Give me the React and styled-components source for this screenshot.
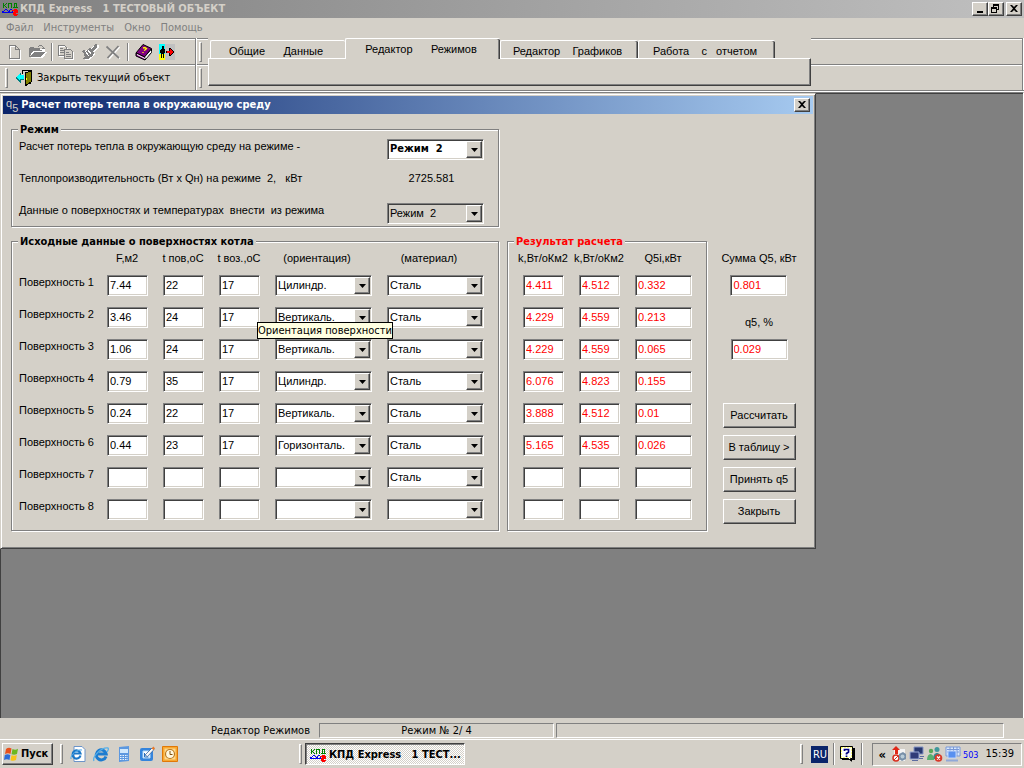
import React, { useState } from 'react';
import styled, { createGlobalStyle, css } from 'styled-components';

const FACE = '#d4d0c8';
const SHADOW = '#808080';
const DARK = '#404040';
const TAHOMA = '"DejaVu Sans Condensed", "DejaVu Sans", sans-serif';
const SANS = '"Liberation Sans", "Noto Sans", sans-serif';

const GlobalStyle = createGlobalStyle`
  * {
    box-sizing: border-box;
  }
  body {
    margin: 0;
    background: ${FACE};
    color: #000;
    font: 11px/14px ${TAHOMA};
  }
  button, input, select {
    font: inherit;
    color: inherit;
    border-radius: 0;
  }
`;

const raised = css`
  border: 1px solid;
  border-color: #fff ${DARK} ${DARK} #fff;
  box-shadow: inset -1px -1px 0 ${SHADOW};
`;

const sunken = css`
  border: 1px solid;
  border-color: ${SHADOW} #fff #fff ${SHADOW};
  box-shadow: inset 1px 1px 0 ${DARK}, inset -1px -1px 0 ${FACE};
`;

const Page = styled.div`
  display: flex;
  flex-direction: column;
  min-height: 100vh;
`;

const AppTitle = styled.header`
  display: flex;
  align-items: center;
  gap: 2px;
  height: 18px;
  padding: 0 2px;
  background: linear-gradient(to right, #808080, #c0c0c0);
  color: ${FACE};
  font-weight: bold;
  white-space: pre;
`;

const TitleText = styled.h1`
  flex: 1;
  margin: 0;
  font: inherit;
`;

const CaptionButton = styled.button`
  ${raised}
  display: flex;
  align-items: center;
  justify-content: center;
  width: 16px;
  height: 14px;
  padding: 0 1px 1px 0;
  background: ${FACE};
  color: #000;
`;

const CaptionPair = styled.div`
  display: flex;
`;

const MenuBar = styled.nav`
  display: flex;
  align-items: center;
  gap: 10px;
  height: 20px;
  padding-left: 6px;

  a {
    color: ${SHADOW};
    text-decoration: none;
  }
`;

const Bars = styled.div`
  display: flex;
  height: 53px;
  border-bottom: 1px solid ${SHADOW};
`;

const BarColumn = styled.div`
  display: flex;
  flex-direction: column;
  flex: ${p => (p.$grow ? '1' : 'none')};
  width: ${p => (p.$grow ? 'auto' : '196px')};
  margin-right: ${p => (p.$grow ? '1px' : '0')};
  border-right: 1px solid ${SHADOW};
  box-shadow: 1px 0 0 #fff;
`;

const Bar = styled.div`
  display: flex;
  align-items: center;
  gap: ${p => p.$gap || 0}px;
  height: 26px;
  padding-left: 5px;
  border-top: 1px solid ${SHADOW};
  box-shadow: inset 0 1px 0 #fff;
`;

const GripColumn = styled.div`
  display: flex;
  flex-direction: column;
  width: 12px;
  padding-left: 1px;
`;

const GripCell = styled.div`
  display: flex;
  align-items: center;
  height: 26px;
  padding-left: 2px;
  border-top: 1px solid ${SHADOW};
  box-shadow: inset 0 1px 0 #fff;
`;

const Grip = styled.span`
  flex: none;
  width: 3px;
  height: 20px;
  border: 1px solid;
  border-color: #fff ${SHADOW} ${SHADOW} #fff;
`;

const Divider = styled.span`
  flex: none;
  width: 2px;
  height: ${p => p.$height || 18}px;
  margin: 0 ${p => p.$space || 0}px;
  border-left: 1px solid ${SHADOW};
  border-right: 1px solid #fff;
`;

const ToolButton = styled.button`
  display: flex;
  align-items: center;
  gap: 5px;
  height: 20px;
  padding: 0 2px;
  border: 0;
  background: none;
  white-space: nowrap;
`;

const TabControl = styled.div`
  display: flex;
  flex-direction: column;
  width: 603px;
  height: 48px;
  font-family: ${SANS};
`;

const TabStrip = styled.div`
  display: flex;
  align-items: flex-end;
  height: 20px;
  padding-left: 2px;
`;

const Tab = styled.button`
  width: ${p => p.$width}px;
  height: 18px;
  padding: 2px 4px 0 0;
  border: 0;
  border-top: 1px solid #fff;
  border-left: 1px solid #fff;
  border-radius: 2px 2px 0 0;
  background: ${FACE};
  box-shadow: ${p => (p.$covered ? 'none' : `inset -1px 0 0 ${DARK}, inset -2px 0 0 ${SHADOW}`)};
  white-space: pre;

  ${p => p.$active && css`
    position: relative;
    height: 21px;
    margin-bottom: -1px;
    padding-bottom: 3px;
  `}
`;

const TabPanel = styled.div`
  ${raised}
  flex: 1;
`;

const Mdi = styled.main`
  flex: 1;
  display: flex;
  align-items: flex-start;
  margin-top: 1px;
  border-top: 1px solid ${SHADOW};
  border-right: 1px solid #fff;
  outline: 1px solid #fff;
  outline-offset: 0;
  background: ${SHADOW};
  box-shadow: inset 1px 1px 0 ${DARK};
`;

const Dialog = styled.section`
  padding: 1px;
  border: 1px solid;
  border-color: ${FACE} ${DARK} ${DARK} ${FACE};
  box-shadow: inset 1px 1px 0 #fff, inset -1px -1px 0 ${SHADOW};
  background: ${FACE};
  font-family: ${SANS};
`;

const DialogTitle = styled.div`
  display: flex;
  align-items: center;
  gap: 3px;
  height: 18px;
  margin: 1px 1px 0;
  padding: 0 3px;
  background: linear-gradient(to right, #0a246a, #a6caf0);
  color: #fff;
  font: bold 11px/14px ${TAHOMA};

  h2 {
    flex: 1;
    margin: 0;
    font: inherit;
  }
`;

const DialogMark = styled.span`
  display: flex;
  color: ${FACE};
  font: 11px/10px ${SANS};

  sub {
    padding-top: 5px;
    font-size: 11px;
    line-height: 10px;
  }
`;

const DialogBody = styled.form`
  display: flex;
  flex-direction: column;
  align-items: flex-start;
  gap: 8px;
  padding: 9px 11px 16px 9px;
`;

const Columns = styled.div`
  display: flex;
  gap: 8px;
`;

const Group = styled.fieldset`
  margin: 0;
  min-width: 0;
  width: ${p => p.$width}px;
  padding: 0 0 0 7px;
  border: 1px solid ${SHADOW};
  box-shadow: inset 1px 1px 0 #fff, 1px 1px 0 #fff;

  legend {
    margin-left: -1px;
    padding: 0 2px;
    background: ${FACE};
    color: ${p => (p.$red ? '#f00' : '#000')};
    font: bold 11px/13px ${TAHOMA};
  }
`;

const ModeRow = styled.div`
  display: flex;
  align-items: flex-start;
  height: 32px;
  white-space: pre;

  &:first-of-type {
    margin-top: 3px;
  }
  &:last-of-type {
    height: 23px;
  }
  > output {
    width: 89px;
    text-align: center;
  }
`;

const ModeText = styled.span`
  flex: none;
  width: 368px;
`;

const Sheet = styled.table`
  table-layout: fixed;
  width: ${p => p.$width}px;
  border-collapse: collapse;

  th, td {
    height: 32px;
    padding: 0 0 0 8px;
    vertical-align: top;
    text-align: left;
    font-weight: normal;
    white-space: nowrap;
  }
  tbody th {
    padding-left: 0;
  }
  tbody tr:last-child > * {
    height: 31px;
  }
`;

const HeadRow = styled.tr`
  && th {
    height: 27px;
    padding: 3px 0 0;
    text-align: center;
  }
  && th.combo {
    padding-right: 12px;
  }
`;

const HeadText = styled.span`
  display: flex;
  justify-content: center;
`;

const Field = styled.input`
  ${sunken}
  display: block;
  width: ${p => p.$width || 41}px;
  height: 21px;
  padding: 0 2px 1px;
  background: #fff;
  color: ${p => (p.$red ? '#f00' : '#000')};
  outline: none;
`;

const ComboBox = styled.span`
  position: relative;
  display: block;
  width: 97px;
  height: 21px;

  select {
    ${sunken}
    appearance: none;
    width: 100%;
    height: 100%;
    padding: 0 18px 1px 2px;
    background: ${p => (p.$gray ? FACE : '#fff')};
    font-family: ${p => (p.$bold ? TAHOMA : 'inherit')};
    font-weight: ${p => (p.$bold ? 'bold' : 'normal')};
    outline: none;
  }
`;

const ComboArrow = styled.span`
  ${raised}
  position: absolute;
  top: 2px;
  right: 2px;
  display: flex;
  align-items: center;
  justify-content: center;
  width: 16px;
  height: 17px;
  background: ${FACE};
  pointer-events: none;
`;

const Hint = styled.span`
  position: absolute;
  z-index: 2;
  top: 15px;
  left: -18px;
  padding: 1px 0 0;
  border: 1px solid #000;
  background: #ffffe1;
  font-family: ${TAHOMA};
  line-height: 14px;
  white-space: nowrap;
`;

const Side = styled.div`
  display: flex;
  flex-direction: column;
  align-items: center;
  width: 88px;
  padding-top: 16px;
`;

const Total = styled.label`
  display: flex;
  flex-direction: column;
  align-items: center;
  gap: 10px;
  height: 64px;
  white-space: nowrap;
`;

const PushButton = styled.button`
  ${raised}
  width: 73px;
  height: 25px;
  padding: 0 0 1px;
  background: ${FACE};
`;

const Actions = styled.div`
  display: flex;
  flex-direction: column;
  gap: 7px;
  padding-top: 24px;
`;

const StatusBar = styled.div`
  display: flex;
  gap: 2px;
  height: 21px;
  padding: 4px 20px 1px 0;
  border-top: 1px solid ${FACE};
  white-space: pre;
`;

const StatusPane = styled.div`
  flex: ${p => (p.$width ? 'none' : '1')};
  width: ${p => p.$width || 0}px;
  border: ${p => (p.$flat ? '0' : '1px solid')};
  border-color: ${SHADOW} #fff #fff ${SHADOW};
  padding: ${p => (p.$flat ? '1px 7px 0 0' : '0')};
  text-align: ${p => (p.$flat ? 'right' : 'center')};
  line-height: 14px;
`;

const TaskBar = styled.footer`
  display: flex;
  align-items: center;
  height: 29px;
  padding: 0 2px;
  border-top: 1px solid #fff;
`;

const StartButton = styled.button`
  ${raised}
  display: flex;
  align-items: center;
  gap: 1px;
  width: 51px;
  height: 22px;
  padding: 0 1px;
  background: ${FACE};
  font-weight: bold;
`;

const QuickLaunch = styled.div`
  display: flex;
  flex: none;
  align-items: center;
  gap: 7px;
  width: 246px;
  padding: 0 0 0 7px;

  button {
    display: flex;
    padding: 0;
    border: 0;
    background: none;
  }
`;

const TaskButton = styled.button`
  border: 1px solid;
  border-color: ${DARK} #fff #fff ${DARK};
  box-shadow: inset 1px 1px 0 ${SHADOW};
  display: flex;
  align-items: center;
  gap: 3px;
  width: 160px;
  height: 22px;
  margin-left: 3px;
  padding: 1px 0 0 4px;
  background: repeating-conic-gradient(#fff 0 25%, ${FACE} 0 50%) 0 0 / 2px 2px;
  font-weight: bold;
  white-space: pre;
`;

const TaskEnd = styled.div`
  display: flex;
  align-items: center;
  margin-left: auto;
  gap: 5px;
`;

const Language = styled.span`
  width: 17px;
  height: 17px;
  margin-left: 3px;
  background: #0a246a;
  color: #fff;
  line-height: 17px;
  text-align: center;
`;

const Tray = styled.div`
  display: flex;
  align-items: center;
  gap: 2px;
  height: 23px;
  margin-left: 4px;
  padding: 0 7px 0 5px;
  border: 1px solid;
  border-color: ${SHADOW} #fff #fff ${SHADOW};

  b {
    margin-right: 3px;
    font-size: 13px;
    line-height: 13px;
  }
  small {
    padding-top: 2px;
    color: #00f;
    font-size: 9px;
  }
  time {
    margin-left: 5px;
  }
`;

const Icon = ({ size = 16, children }) => (
  <svg width={size} height={size} viewBox={`0 0 ${size} ${size}`} fill="none" aria-hidden="true">
    {children}
  </svg>
);

const AppIcon = ({ top = '#008000' }) => (
  <svg width="16" height="14" viewBox="0 0 16 14" fill="none" shapeRendering="crispEdges" aria-hidden="true">
    <path d="M1 1h1v5H1zM4 1h1v1H4zM3 2h1v1H3zM2 3h1v1H2zM3 4h1v1H3zM4 5h1v1H4z" fill={top} />
    <path d="M6 1h4v5H9V2H7v4H6zM12 1h3v4h1v1h-5V5h1zM13 2v3h1V2z" fill={top} fillRule="evenodd" />
    <path d="M0 9h2v1H0zM2 8h1v1H2zM3 7h2v1H3zM5 8h1v1H5zM6 9h2v1H6zM7 8h1v1H7zM8 7h2v1H8z" fill="#0000f0" />
    <path d="M0 10h10V9h1v1h1v1H0z" fill="#0000f0" />
    <path d="M10 8h2V7h3v1h1v3h-2v1h2v1h-1v1h-3v-1h-1v-3h1V9h-2z" fill="#f00" />
  </svg>
);

const NewIcon = () => (
  <Icon>
    <g shapeRendering="crispEdges">
      <path d="M3.500 2.500h6l4 4v9h-10z" stroke="#fff" />
      <path d="M2.500 1.500h6l4 4v9h-10zM8.500 1.500v4h4" stroke={SHADOW} />
    </g>
  </Icon>
);

const OpenIcon = () => (
  <Icon size={18}>
    <g shapeRendering="crispEdges">
      <path d="M2 15h12l4-6h-2v-3H9L8 5H4L2 6z" fill="#fff" />
      <path d="M0 14V5h1V4h4v1h6v2h2v1H4L1 13zM1 14l4-5h11l-4 5z" fill={SHADOW} />
      <path d="M9 3.500h1M10 2.500h3M13 3.500h1M14 4.500h1M13 5.500h3" stroke={SHADOW} />
    </g>
  </Icon>
);

const CopyIcon = () => (
  <Icon size={18}>
    <g shapeRendering="crispEdges">
      <path d="M2.500 3.500h6l2 2v8h-8zM8.500 7.500h6l2 2v7h-8z" stroke="#fff" />
      <path d="M1.500 2.500h6l2 2v8h-8z" stroke={SHADOW} />
      <path d="M3 5.500h3M3 7.500h4M3 9.500h4" stroke={SHADOW} />
      <path d="M7.500 6.500h6l2 2v7h-8z" fill={FACE} stroke={SHADOW} />
      <path d="M9 9.500h3M9 11.500h5M9 13.500h5" stroke={SHADOW} />
    </g>
  </Icon>
);

const BrushIcon = () => (
  <Icon size={18}>
    <g shapeRendering="crispEdges">
      <path d="M17 2h1v3l-5 4 1 2-4 4-2 2H3l2-2-3-7 6-1z" fill="#fff" />
      <path d="M14 1h2v3l-4 4 1 2-1 2-2 2-3 2H1l3-2-2-2 1-1-2-2 1-2 3 1 2-1 1-2h2z" fill={SHADOW} />
      <path d="M4 8l4 5M7 7l3 4M13 3l-3 3" stroke="#fff" />
    </g>
  </Icon>
);

const DeleteIcon = () => (
  <Icon>
    <path d="M3 3.500l12 11M14.500 3L4 15" stroke="#fff" strokeWidth="1.500" />
    <path d="M1.500 2.500l12.500 11.500M13.500 2L2.500 14" stroke={SHADOW} strokeWidth="1.700" />
  </Icon>
);

const BookIcon = () => (
  <Icon size={18}>
    <path d="M1 10L8 1.500l8.500 4-7 8.500z" fill="#800080" stroke="#000" />
    <path d="M9.500 14L16.500 6v3.500L10 17z" fill="#fff" stroke="#000" />
    <path d="M1 10v3l9 4v-3z" fill="#800080" stroke="#000" />
    <path d="M2 11.500l8 4M10 15.500L16 8.500" stroke="#fff" />
    <path d="M8 5l2-.500 1.500 1-1.500 1.500-1 .500M8 9v1" stroke="#ff0" strokeWidth="1.300" />
  </Icon>
);

const ExitIcon = () => (
  <Icon>
    <g shapeRendering="crispEdges">
      <path d="M0 0h6v10H0z" fill="#0ff" />
      <path d="M0 10h6v6H0z" fill="#ff0" />
      <path d="M6 0h10v16H6z" fill="#c0c0c0" />
      <path d="M3 2h2v3h1v4H5v5H4v-4H3v4H2V9H1V6h1V5h1z" fill="#000" />
      <path d="M7 7h3V4h1l4 4-4 4h-1V9H7z" fill="#000" />
      <path d="M8 7h3V5l3 3-3 3V9H8z" fill="#f00" />
    </g>
  </Icon>
);

const DoorIcon = () => (
  <Icon>
    <g shapeRendering="crispEdges">
      <path d="M6.500 4V.500h8v13h-2" stroke="#000" />
      <path d="M7 1h7v2H7z" fill={FACE} />
      <path d="M9 3l6-2v11l-6 4z" fill="#808000" stroke="#000" />
      <path d="M10 8h1v2h-1z" fill="#ff0" />
      <path d="M0 7l4-4v2h4v4H4v3z" fill="#0ff" />
      <path d="M0 7.500L4 11.500V9.500h4M4 3v2" stroke="#008080" />
    </g>
  </Icon>
);

const CloseGlyph = () => (
  <svg width="8" height="7" viewBox="0 0 8 7" aria-hidden="true">
    <path d="M0 0h2l2 2 2-2h2L5 3.500 8 7H6L4 5 2 7H0l3-3.500z" fill="#000" />
  </svg>
);

const MinGlyph = () => (
  <svg width="8" height="8" viewBox="0 0 8 8" aria-hidden="true">
    <path d="M1 6h6v2H1z" fill="#000" />
  </svg>
);

const RestoreGlyph = () => (
  <svg width="9" height="9" viewBox="0 0 9 9" shapeRendering="crispEdges" aria-hidden="true">
    <path d="M2 0h6v6H6V5h1V2H3v1H2zM0 3h6v6H0zM1 5v3h4V5z" fill="#000" fillRule="evenodd" />
  </svg>
);

const WindowsIcon = () => (
  <Icon>
    <path d="M2 3c2-1.500 3.500-1.500 5.500-.500L6.500 8C5 7 3 7 1 8z" fill="#e8501c" />
    <path d="M8.500 3c2 1 3.500 1 5.500-.200L13 8c-2 1-3.500 1-5.500.300z" fill="#6cb820" />
    <path d="M.800 9c2-1 3.500-1 5.500 0L5.500 14c-2-1-3.500-1-5.500 0z" fill="#2c6cd8" />
    <path d="M7.500 9.300c2 .700 3.500.700 5.300-.300L12 14c-2 1-3.500 1-5.500.200z" fill="#f8c418" />
  </Icon>
);

const IePageIcon = () => (
  <Icon>
    <path d="M4 .500h8l3 3v12H4z" fill="#fff" stroke="#6c94c8" />
    <path d="M10.500 9.500A4 4 0 1 1 10.500 7.500H4" stroke="#1c78c8" strokeWidth="2.200" />
    <path d="M1 13C0 9 7 3 12 4" stroke="#48a8e8" />
  </Icon>
);

const IeIcon = () => (
  <Icon>
    <path d="M13 10.500A5 5 0 1 1 13.200 8H4" stroke="#1c7cd0" strokeWidth="3" />
    <path d="M1 15C-1 11 8 1 15 2c1 1 .500 2-1 4" stroke="#58b0e8" strokeWidth="1.300" />
  </Icon>
);

const DeviceIcon = () => (
  <Icon>
    <path d="M3 1l10-1v15l-10 1z" fill="#5c98e0" />
    <path d="M4 3h8v4H4z" fill="#d0e8fc" />
    <path d="M4 9.500h8M4 11.500h8M4 13.500h8" stroke="#e8f4ff" strokeDasharray="1.500 1" />
  </Icon>
);

const DesktopIcon = () => (
  <Icon>
    <rect x="1" y="2" width="13" height="13" rx="2" fill="#3484dc" />
    <path d="M4 5h7v7H4z" fill="#fff" stroke="#b8dcf8" />
    <path d="M6 9l7-7 2 1.500-6.500 7z" fill="#f8f8f8" stroke="#205090" strokeWidth=".700" />
    <path d="M5.500 7v4h4" stroke="#2870c0" />
    <path d="M12.500 2.500l2-2 1.500 2-1.500 1.500z" fill="#e87828" />
  </Icon>
);

const ClockIcon = () => (
  <Icon>
    <path d="M.500.500h15v15H.500z" fill="#f8a830" stroke="#e07808" />
    <path d="M2.500 2.500h11v11h-11z" fill="#fcd890" />
    <circle cx="8" cy="8" r="4.500" fill="#fff8e0" stroke="#b87820" strokeWidth="1.200" />
    <path d="M8 5v3.500h2.500" stroke="#805010" />
  </Icon>
);

const HelpIcon = () => (
  <Icon>
    <path d="M2 2h13v12h-3v2l-2-2H2z" fill="#000" />
    <path d="M.500.500h12v12h-2v2l-2-2h-8z" fill="#fff" stroke="#000" />
    <path d="M1.500 1.500h10v10h-10z" stroke="#ff0" strokeDasharray="1 2" />
    <path d="M4.500 5V3.500H8.500V6L6.500 7.500V8.500M6.500 9.500v1.500" stroke="#000080" strokeWidth="1.700" />
  </Icon>
);

const BlockedIcon = () => (
  <Icon>
    <path d="M3 3h11v12H3z" fill="#f4f4f4" />
    <path d="M5 0l4 4H7v4H4V4H1z" fill="#e02818" />
    <circle cx="5" cy="12" r="3" fill="#fff" stroke="#d83020" strokeWidth="1.500" />
    <path d="M3 14l4-4" stroke="#d83020" />
    <path d="M8 8l4-2 3 2v5l-4 2-3-2z" fill="#7890a8" />
    <circle cx="11.500" cy="10.500" r="2" fill="#b8ccd8" />
  </Icon>
);

const NetworkIcon = () => (
  <Icon>
    <path d="M5 1h9v7H5z" fill="#283870" stroke="#8494c4" />
    <path d="M1 6h9v7H1z" fill="#303c78" stroke="#98a8d4" />
    <path d="M3 14.500h6M11 10.500h4M10 12.500h4" stroke="#5c6ca0" />
  </Icon>
);

const MessengerIcon = () => (
  <Icon>
    <circle cx="10" cy="3.500" r="2.500" fill="#40989c" />
    <path d="M6 13c0-8 8-8 8 0z" fill="#388890" />
    <circle cx="4" cy="5" r="2.200" fill="#58a858" />
    <path d="M0 14c0-8 7-8 7 0z" fill="#58b070" />
    <circle cx="11.500" cy="12" r="3.800" fill="#d83828" />
    <path d="M10 10.500l3 3M13 10.500l-3 3" stroke="#fff" strokeWidth="1.300" />
  </Icon>
);

const KeyboardIcon = () => (
  <Icon>
    <path d="M1 1h14v9H1z" fill="#d8e8fc" stroke="#7898d8" />
    <path d="M2 3.500h12M2 6h12M5 1v9M8.500 1v9M12 1v9" stroke="#7898d8" />
    <path d="M3 5h8v7H3z" fill="#5890f0" stroke="#c0d4f8" />
    <path d="M1 14.500h12" stroke="#90a8d8" strokeWidth="2" />
  </Icon>
);

const ORIENTATIONS = ['', 'Цилиндр.', 'Вертикаль.', 'Горизонталь.'];
const MATERIALS = ['', 'Сталь'];
const MODES = ['Режим\u00a0 1', 'Режим\u00a0 2', 'Режим\u00a0 3', 'Режим\u00a0 4'];

const surfaces = [
  { f: '7.44', tSurface: '22', tAir: '17', orientation: 'Цилиндр.', material: 'Сталь' },
  { f: '3.46', tSurface: '24', tAir: '17', orientation: 'Вертикаль.', material: 'Сталь', hint: 'Ориентация поверхности' },
  { f: '1.06', tSurface: '24', tAir: '17', orientation: 'Вертикаль.', material: 'Сталь' },
  { f: '0.79', tSurface: '35', tAir: '17', orientation: 'Цилиндр.', material: 'Сталь' },
  { f: '0.24', tSurface: '22', tAir: '17', orientation: 'Вертикаль.', material: 'Сталь' },
  { f: '0.44', tSurface: '23', tAir: '17', orientation: 'Горизонталь.', material: 'Сталь' },
  { f: '', tSurface: '', tAir: '', orientation: '', material: 'Сталь' },
  { f: '', tSurface: '', tAir: '', orientation: '', material: '' },
];

const results = [
  ['4.411', '4.512', '0.332'],
  ['4.229', '4.559', '0.213'],
  ['4.229', '4.559', '0.065'],
  ['6.076', '4.823', '0.155'],
  ['3.888', '4.512', '0.01'],
  ['5.165', '4.535', '0.026'],
  ['', '', ''],
  ['', '', ''],
];

const tabs = [
  { title: 'Общие      Данные', width: 135 },
  { title: 'Редактор      Режимов', width: 155 },
  { title: 'Редактор    Графиков', width: 138 },
  { title: 'Работа    с   отчетом', width: 137 },
];

const Combo = ({ id, label, options, value, bold, gray, hint }) => (
  <ComboBox $bold={bold} $gray={gray}>
    <select id={id} aria-label={label} defaultValue={value}>
      {options.map(option => <option key={option} value={option}>{option}</option>)}
    </select>
    <ComboArrow>
      <svg width="7" height="4" viewBox="0 0 7 4" aria-hidden="true">
        <path d="M0 0h7L3.500 4z" fill="#000" />
      </svg>
    </ComboArrow>
    {hint && <Hint role="tooltip">{hint}</Hint>}
  </ComboBox>
);

const SurfaceTable = () => (
  <Sheet $width={472}>
    <colgroup>
      <col style={{ width: 80 }} />
      <col style={{ width: 56 }} />
      <col style={{ width: 56 }} />
      <col style={{ width: 56 }} />
      <col style={{ width: 112 }} />
      <col style={{ width: 112 }} />
    </colgroup>
    <thead>
      <HeadRow>
        <th />
        <th scope="col">F,м2</th>
        <th scope="col">t пов,оС</th>
        <th scope="col">t воз.,оС</th>
        <th scope="col" className="combo">(ориентация)</th>
        <th scope="col" className="combo">(материал)</th>
      </HeadRow>
    </thead>
    <tbody>
      {surfaces.map((row, i) => {
        const name = `Поверхность ${i + 1}`;
        return (
          <tr key={name}>
            <th scope="row">{name}</th>
            <td><Field aria-label={`${name}, F`} defaultValue={row.f} /></td>
            <td><Field aria-label={`${name}, t пов`} defaultValue={row.tSurface} /></td>
            <td><Field aria-label={`${name}, t воз`} defaultValue={row.tAir} /></td>
            <td>
              <Combo label={`${name}, ориентация`} options={ORIENTATIONS} value={row.orientation} hint={row.hint} />
            </td>
            <td><Combo label={`${name}, материал`} options={MATERIALS} value={row.material} /></td>
          </tr>
        );
      })}
    </tbody>
  </Sheet>
);

const ResultTable = () => (
  <Sheet $width={184}>
    <colgroup>
      <col style={{ width: 56 }} />
      <col style={{ width: 56 }} />
      <col style={{ width: 72 }} />
    </colgroup>
    <thead>
      <HeadRow>
        <th scope="col"><HeadText>k,Вт/оКм2</HeadText></th>
        <th scope="col"><HeadText>k,Вт/оКм2</HeadText></th>
        <th scope="col"><HeadText>Q5i,кВт</HeadText></th>
      </HeadRow>
    </thead>
    <tbody>
      {results.map((row, i) => (
        <tr key={i}>
          {row.map((value, j) => (
            <td key={j}>
              <Field
                $red
                $width={j === 2 ? 57 : 41}
                aria-label={`Результат ${i + 1}.${j + 1}`}
                defaultValue={value}
              />
            </td>
          ))}
        </tr>
      ))}
    </tbody>
  </Sheet>
);

const LossDialog = () => (
  <Dialog role="dialog" aria-labelledby="loss-title">
    <DialogTitle>
      <DialogMark>q<sub>5</sub></DialogMark>
      <h2 id="loss-title">Расчет потерь тепла в окружающую среду</h2>
      <CaptionButton aria-label="Закрыть окно"><CloseGlyph /></CaptionButton>
    </DialogTitle>
    <DialogBody onSubmit={e => e.preventDefault()}>
      <Group $width={488}>
        <legend>Режим</legend>
        <ModeRow>
          <ModeText as="label" htmlFor="mode">Расчет потерь тепла в окружающую среду на режиме -</ModeText>
          <Combo id="mode" options={MODES} value={MODES[1]} bold />
        </ModeRow>
        <ModeRow>
          <ModeText>Теплопроизводительность (Вт х Qн) на режиме  2,   кВт</ModeText>
          <output>2725.581</output>
        </ModeRow>
        <ModeRow>
          <ModeText as="label" htmlFor="source">Данные о поверхностях и температурах  внести  из режима</ModeText>
          <Combo id="source" options={MODES} value={MODES[1]} gray />
        </ModeRow>
      </Group>
      <Columns>
        <Group $width={488}>
          <legend>Исходные данные о поверхностях котла</legend>
          <SurfaceTable />
        </Group>
        <Group $width={200} $red>
          <legend>Результат расчета</legend>
          <ResultTable />
        </Group>
        <Side>
          <Total>
            Сумма Q5, кВт
            <Field $red $width={57} defaultValue="0.801" />
          </Total>
          <Total>
            q5, %
            <Field $red $width={57} defaultValue="0.029" />
          </Total>
          <Actions>
            <PushButton type="button">Рассчитать</PushButton>
            <PushButton type="button">В таблицу &gt;</PushButton>
            <PushButton type="button">Принять q5</PushButton>
            <PushButton type="button">Закрыть</PushButton>
          </Actions>
        </Side>
      </Columns>
    </DialogBody>
  </Dialog>
);

const App = () => {
  const [activeTab, setActiveTab] = useState(1);

  return (
    <Page>
      <GlobalStyle />
      <AppTitle>
        <AppIcon />
        <TitleText>КПД Express   1 ТЕСТОВЫЙ ОБЪЕКТ</TitleText>
        <CaptionPair>
          <CaptionButton aria-label="Свернуть"><MinGlyph /></CaptionButton>
          <CaptionButton aria-label="Восстановить"><RestoreGlyph /></CaptionButton>
        </CaptionPair>
        <CaptionButton aria-label="Закрыть программу"><CloseGlyph /></CaptionButton>
      </AppTitle>
      <MenuBar>
        <a href="#file">Файл</a>
        <a href="#tools">Инструменты</a>
        <a href="#window">Окно</a>
        <a href="#help">Помощь</a>
      </MenuBar>
      <Bars>
        <BarColumn>
          <Bar $gap={2}>
            <ToolButton aria-label="Создать"><NewIcon /></ToolButton>
            <ToolButton aria-label="Открыть"><OpenIcon /></ToolButton>
            <Divider />
            <ToolButton aria-label="Копировать"><CopyIcon /></ToolButton>
            <ToolButton aria-label="Формат"><BrushIcon /></ToolButton>
            <ToolButton aria-label="Удалить"><DeleteIcon /></ToolButton>
            <Divider $space={2} />
            <ToolButton aria-label="Справка"><BookIcon /></ToolButton>
            <ToolButton aria-label="Выход"><ExitIcon /></ToolButton>
          </Bar>
          <Bar $gap={6}>
            <Grip />
            <ToolButton><DoorIcon />Закрыть текущий объект</ToolButton>
          </Bar>
        </BarColumn>
        <GripColumn>
          <GripCell><Grip /></GripCell>
          <GripCell><Grip /></GripCell>
        </GripColumn>
        <TabControl>
          <TabStrip role="tablist">
            {tabs.map((tab, i) => (
              <Tab
                key={tab.title}
                role="tab"
                aria-selected={i === activeTab}
                $active={i === activeTab}
                $covered={i === activeTab - 1}
                $width={tab.width}
                onClick={() => setActiveTab(i)}
              >
                {tab.title}
              </Tab>
            ))}
          </TabStrip>
          <TabPanel />
        </TabControl>
        <BarColumn $grow>
          <Bar />
          <Bar />
        </BarColumn>
      </Bars>
      <Mdi>
        <LossDialog />
      </Mdi>
      <StatusBar>
        <StatusPane $flat $width={317}>Редактор Режимов</StatusPane>
        <StatusPane $width={235}>Режим № 2/ 4</StatusPane>
        <StatusPane />
      </StatusBar>
      <TaskBar>
        <StartButton><WindowsIcon />Пуск</StartButton>
        <QuickLaunch>
          <Grip />
          <button aria-label="Страница"><IePageIcon /></button>
          <button aria-label="Интернет"><IeIcon /></button>
          <button aria-label="Устройство"><DeviceIcon /></button>
          <button aria-label="Рабочий стол"><DesktopIcon /></button>
          <button aria-label="Календарь"><ClockIcon /></button>
        </QuickLaunch>
        <Grip />
        <TaskButton><AppIcon />КПД Express   1 ТЕСТ...</TaskButton>
        <TaskEnd>
          <Grip />
          <Language>RU</Language>
          <Divider $height={22} />
          <HelpIcon />
          <Divider $height={22} />
          <Tray>
            <b>«</b>
            <BlockedIcon />
            <NetworkIcon />
            <MessengerIcon />
            <KeyboardIcon />
            <small>503</small>
            <time>15:39</time>
          </Tray>
        </TaskEnd>
      </TaskBar>
    </Page>
  );
};

export default App;
